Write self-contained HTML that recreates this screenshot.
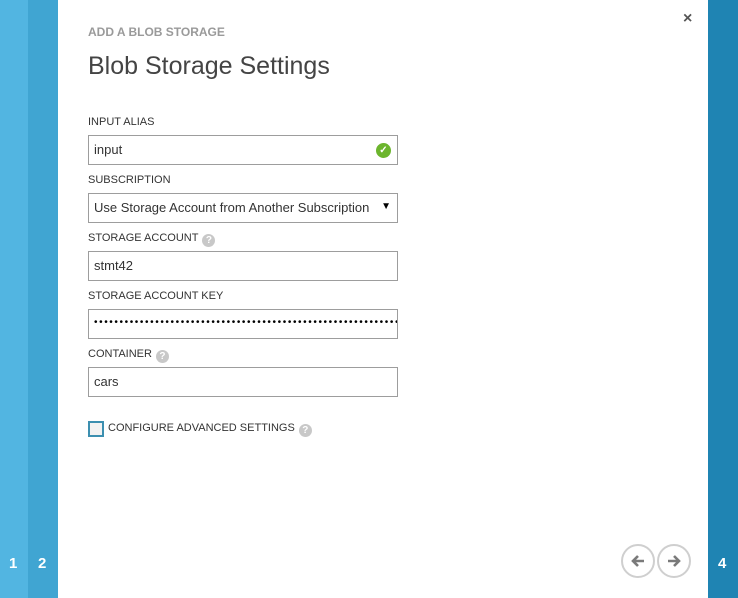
<!DOCTYPE html>
<html><head><style>
*{margin:0;padding:0;box-sizing:border-box}
body{width:738px;height:598px;position:relative;background:#fff;font-family:"Segoe UI","Liberation Sans",sans-serif;overflow:hidden;color:#333}
.s1{position:absolute;left:0;top:0;width:28px;height:598px;background:#52b5e1}
.s2{position:absolute;left:28px;top:0;width:30px;height:598px;background:#40a5d2}
.s4{position:absolute;left:708px;top:0;width:30px;height:598px;background:#1f84b3}
.num{position:absolute;color:#fff;font-weight:bold;font-size:15px;top:555px}
.lab{position:absolute;left:88px;font-size:11px;color:#333}
.inp{position:absolute;left:88px;width:310px;height:30px;border:1px solid #9d9d9d;font-size:13px;padding:6px 0 0 5px;color:#333}
.q{display:inline-block;width:13px;height:13px;border-radius:50%;background:#c8c8c8;color:#fff;font-size:10px;font-weight:bold;text-align:center;line-height:13px;vertical-align:-2px;margin-left:4px}
.nav{position:absolute;top:544px;width:34px;height:34px;border:2px solid #cfcfcf;border-radius:50%}
.nav svg{position:absolute;left:7px;top:7px}
</style></head><body>
<div class="s1"></div><div class="s2"></div><div class="s4"></div>
<div class="num" style="left:9px">1</div>
<div class="num" style="left:38px">2</div>
<div class="num" style="left:718px">4</div>
<div style="position:absolute;left:683px;top:10px;font-size:16px;font-weight:bold;color:#555">×</div>
<div style="position:absolute;left:88px;top:25px;font-size:12px;color:#9a9a9a;font-weight:bold">ADD A BLOB STORAGE</div>
<div style="position:absolute;left:88px;top:52px;font-size:25px;color:#444;font-weight:300">Blob Storage Settings</div>
<div class="lab" style="top:116px">INPUT ALIAS</div>
<div class="inp" style="top:135px">input<span style="position:absolute;right:6px;top:7px;width:15px;height:15px;border-radius:50%;background:#6cb52d;color:#fff;font-size:10px;text-align:center;line-height:15px;font-weight:bold">✓</span></div>
<div class="lab" style="top:174px">SUBSCRIPTION</div>
<div class="inp" style="top:193px">Use Storage Account from Another Subscription<span style="position:absolute;right:6px;top:7px;font-size:10px;color:#000">▼</span></div>
<div class="lab" style="top:232px">STORAGE ACCOUNT<span class="q">?</span></div>
<div class="inp" style="top:251px">stmt42</div>
<div class="lab" style="top:290px">STORAGE ACCOUNT KEY</div>
<div class="inp" style="top:309px;overflow:hidden;white-space:nowrap;font-size:10px;padding-top:7px;letter-spacing:1.6px;color:#000;padding-right:4px">•••••••••••••••••••••••••••••••••••••••••••••••••••••••••••••••••••</div>
<div class="lab" style="top:348px">CONTAINER<span class="q">?</span></div>
<div class="inp" style="top:367px">cars</div>
<div style="position:absolute;left:88px;top:421px;width:16px;height:16px;border:2px solid #3c8fb0;background:#f2f2f2"></div>
<div class="lab" style="left:108px;top:422px">CONFIGURE ADVANCED SETTINGS<span class="q">?</span></div>
<div class="nav" style="left:621px"><svg width="16" height="16" viewBox="0 0 16 16"><path d="M14 8H3M8 3L3 8L8 13" fill="none" stroke="#7a7a7a" stroke-width="2.6"/></svg></div>
<div class="nav" style="left:657px"><svg width="16" height="16" viewBox="0 0 16 16"><path d="M2 8H13M8 3L13 8L8 13" fill="none" stroke="#7a7a7a" stroke-width="2.6"/></svg></div>
</body></html>
